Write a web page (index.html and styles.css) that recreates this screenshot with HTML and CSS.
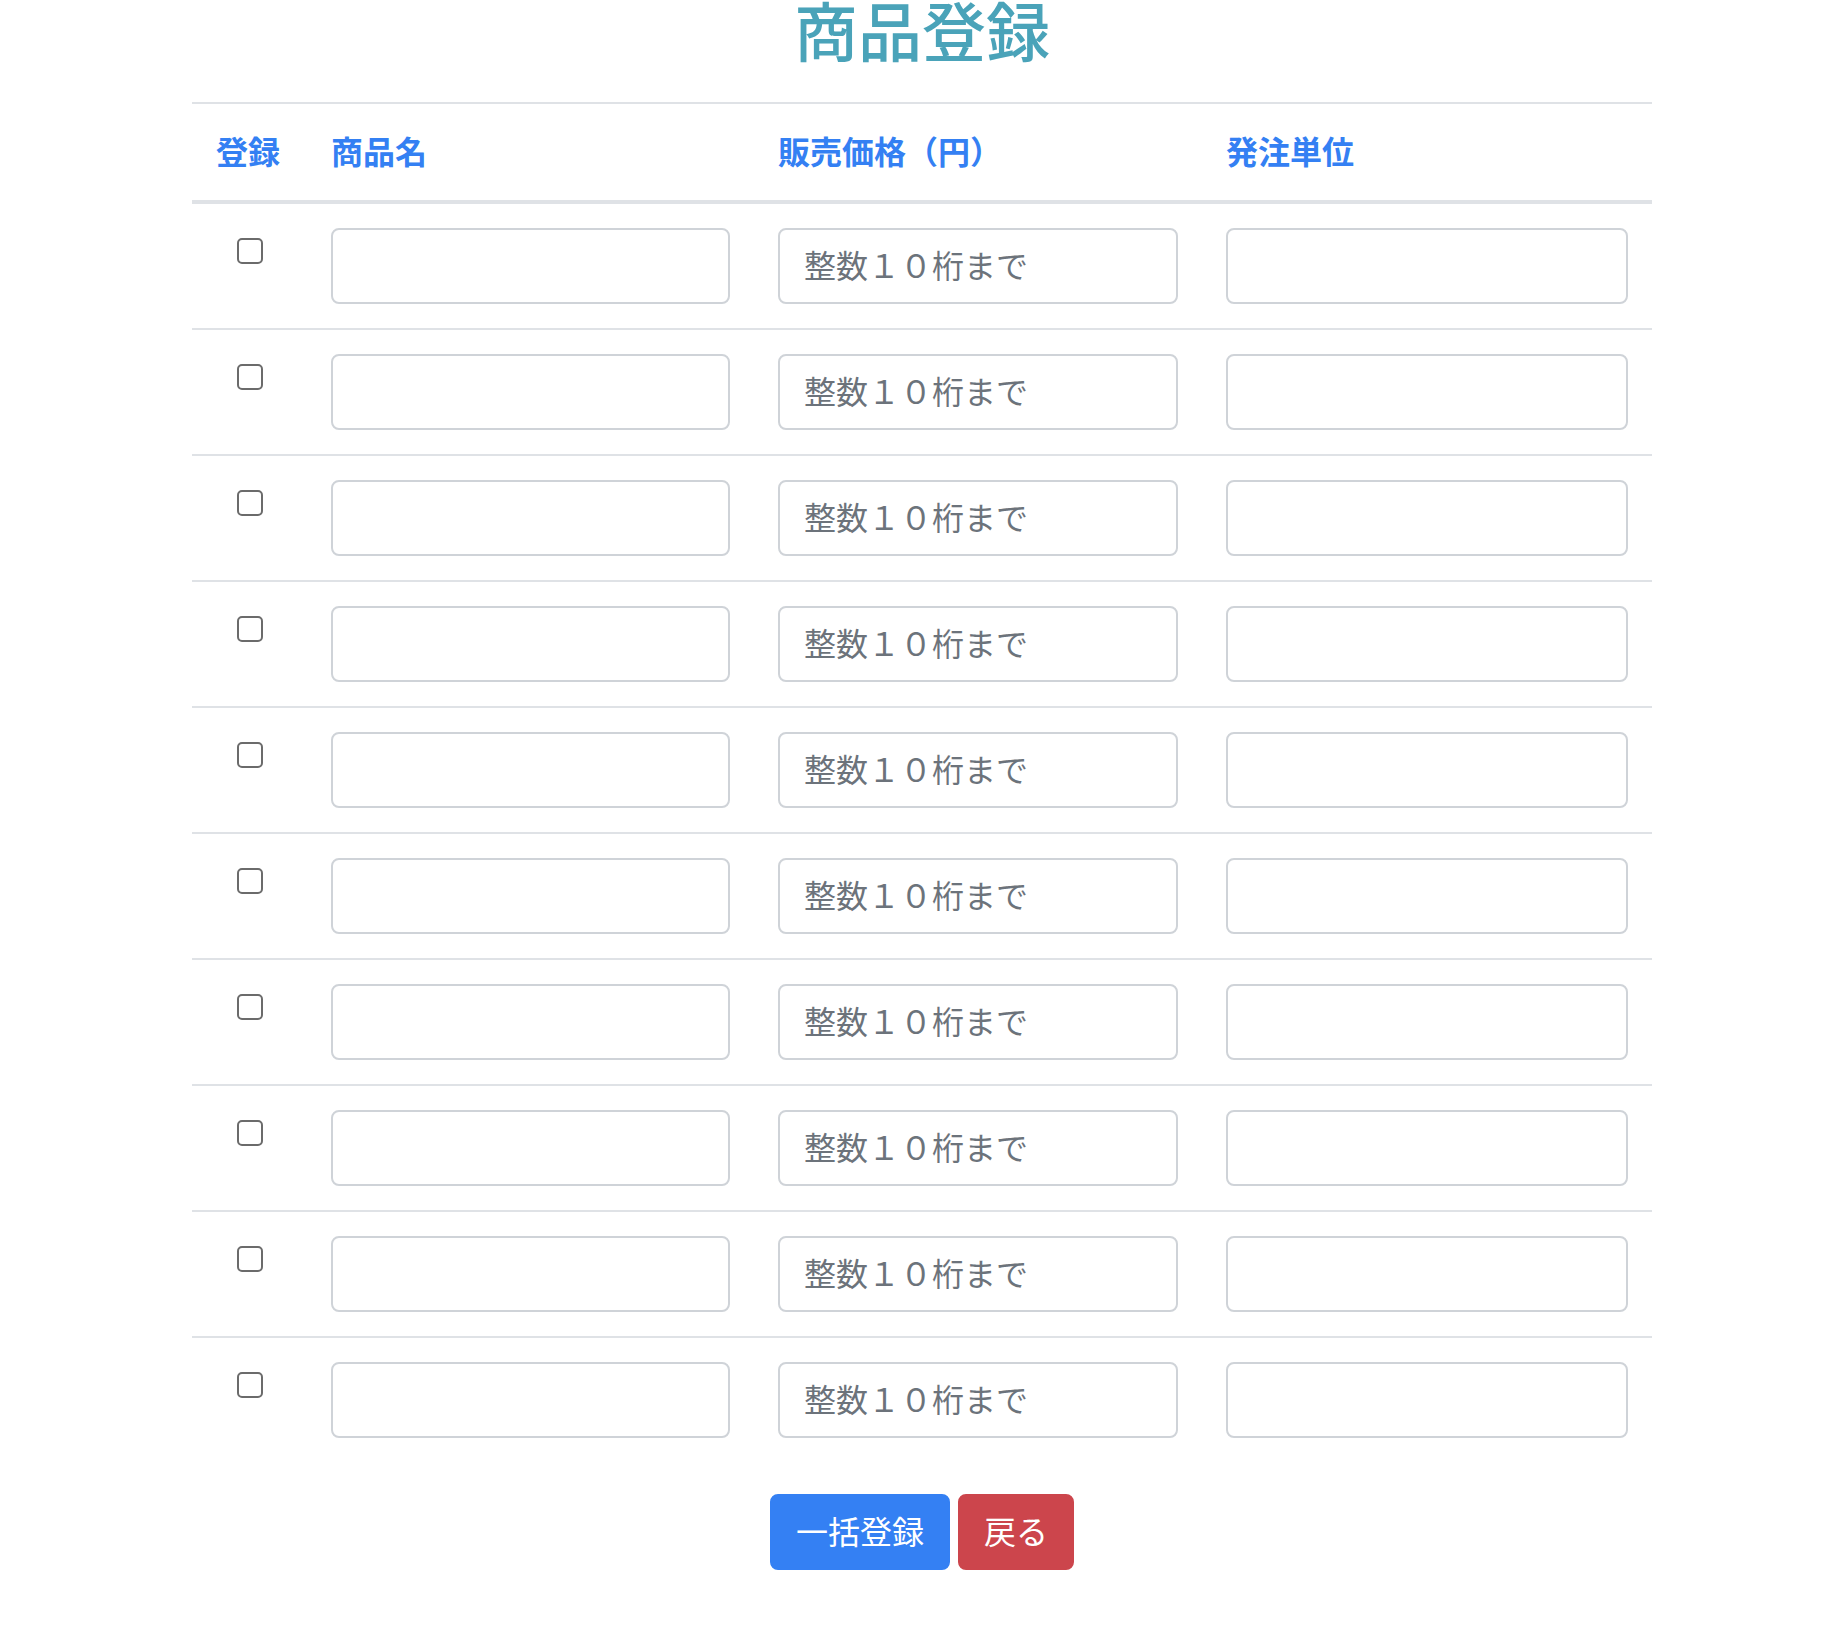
FILE: index.html
```html
<!DOCTYPE html>
<html lang="ja">
<head>
<meta charset="utf-8">
<title>商品登録</title>
<link rel="stylesheet" href="styles.css">
</head>
<body>
<div class="page">
  <h1 class="title">商品登録</h1>
  <form class="form">
    <table class="items">
      <colgroup>
        <col class="c-check"><col class="c-name"><col class="c-price"><col class="c-unit">
      </colgroup>
      <thead>
        <tr><th>登録</th><th>商品名</th><th>販売価格（円）</th><th>発注単位</th></tr>
      </thead>
      <tbody>
        <tr><td class="cell-check"><input type="checkbox" class="check"></td><td><input type="text" class="field"></td><td><input type="text" class="field" placeholder="整数１０桁まで"></td><td><input type="text" class="field"></td></tr>
        <tr><td class="cell-check"><input type="checkbox" class="check"></td><td><input type="text" class="field"></td><td><input type="text" class="field" placeholder="整数１０桁まで"></td><td><input type="text" class="field"></td></tr>
        <tr><td class="cell-check"><input type="checkbox" class="check"></td><td><input type="text" class="field"></td><td><input type="text" class="field" placeholder="整数１０桁まで"></td><td><input type="text" class="field"></td></tr>
        <tr><td class="cell-check"><input type="checkbox" class="check"></td><td><input type="text" class="field"></td><td><input type="text" class="field" placeholder="整数１０桁まで"></td><td><input type="text" class="field"></td></tr>
        <tr><td class="cell-check"><input type="checkbox" class="check"></td><td><input type="text" class="field"></td><td><input type="text" class="field" placeholder="整数１０桁まで"></td><td><input type="text" class="field"></td></tr>
        <tr><td class="cell-check"><input type="checkbox" class="check"></td><td><input type="text" class="field"></td><td><input type="text" class="field" placeholder="整数１０桁まで"></td><td><input type="text" class="field"></td></tr>
        <tr><td class="cell-check"><input type="checkbox" class="check"></td><td><input type="text" class="field"></td><td><input type="text" class="field" placeholder="整数１０桁まで"></td><td><input type="text" class="field"></td></tr>
        <tr><td class="cell-check"><input type="checkbox" class="check"></td><td><input type="text" class="field"></td><td><input type="text" class="field" placeholder="整数１０桁まで"></td><td><input type="text" class="field"></td></tr>
        <tr><td class="cell-check"><input type="checkbox" class="check"></td><td><input type="text" class="field"></td><td><input type="text" class="field" placeholder="整数１０桁まで"></td><td><input type="text" class="field"></td></tr>
        <tr><td class="cell-check"><input type="checkbox" class="check"></td><td><input type="text" class="field"></td><td><input type="text" class="field" placeholder="整数１０桁まで"></td><td><input type="text" class="field"></td></tr>
      </tbody>
    </table>
    <div class="actions">
      <button type="button" class="btn btn-primary">一括登録</button>
      <button type="button" class="btn btn-danger">戻る</button>
    </div>
  </form>
</div>
</body>
</html>
```
FILE: styles.css
```css
html, body {
  margin: 0;
  padding: 0;
  background: #ffffff;
}

body {
  font-family: "Noto Sans CJK JP", "Noto Sans", sans-serif;
  font-size: 32px;
  line-height: 48px;
  color: #212529;
}

.page {
  width: 1460px;
  margin-left: calc(50% - 729px);
}

.title {
  margin: 0;
  height: 102px;
  font-size: 64px;
  line-height: 56px;
  font-weight: 500;
  color: #4aa3b9;
  text-align: center;
}

.items {
  width: 1460px;
  table-layout: fixed;
  border-collapse: separate;
  border-spacing: 0;
}

.c-check { width: 115px; }
.c-name { width: 447px; }
.c-price { width: 448px; }
.c-unit { width: 450px; }

.items th {
  padding: 22px 24px 26px;
  text-align: left;
  font-weight: 700;
  color: #3480f3;
  border-top: 2px solid #dfe2e6;
  border-bottom: 4px solid #dfe2e6;
  white-space: nowrap;
}

.items td {
  padding: 24px;
  vertical-align: top;
  border-top: 2px solid #dfe2e6;
}

.items tbody tr:first-child td {
  border-top: none;
}

.cell-check {
  text-align: center;
}

.check {
  -webkit-appearance: none;
  appearance: none;
  display: inline-block;
  box-sizing: border-box;
  width: 26px;
  height: 26px;
  margin: 10px 0 0 0;
  border: 2.5px solid #6b6b6b;
  border-radius: 5px;
  background: #fff;
  vertical-align: top;
}

.field {
  display: block;
  box-sizing: border-box;
  width: 100%;
  height: 76px;
  margin: 0;
  padding: 10px 24px 14px;
  font-family: "Noto Sans CJK JP", "Noto Sans", sans-serif;
  font-size: 32px;
  line-height: 48px;
  color: #495057;
  background: #fff;
  border: 2px solid #cfd3d8;
  border-radius: 8px;
  outline: none;
}

.field::placeholder {
  color: #6c737b;
  opacity: 1;
}

.actions {
  display: flex;
  justify-content: center;
  gap: 8px;
  margin-top: 32px;
}

.btn {
  box-sizing: border-box;
  height: 76px;
  margin: 0;
  padding: 10px 24px 14px;
  font-family: "Noto Sans CJK JP", "Noto Sans", sans-serif;
  font-size: 32px;
  line-height: 48px;
  font-weight: 400;
  color: #ffffff;
  border: 2px solid transparent;
  border-radius: 8px;
  cursor: pointer;
}

.btn-primary {
  background: #3480f3;
  border-color: #3480f3;
}

.btn-danger {
  background: #cc454c;
  border-color: #cc454c;
}
```
